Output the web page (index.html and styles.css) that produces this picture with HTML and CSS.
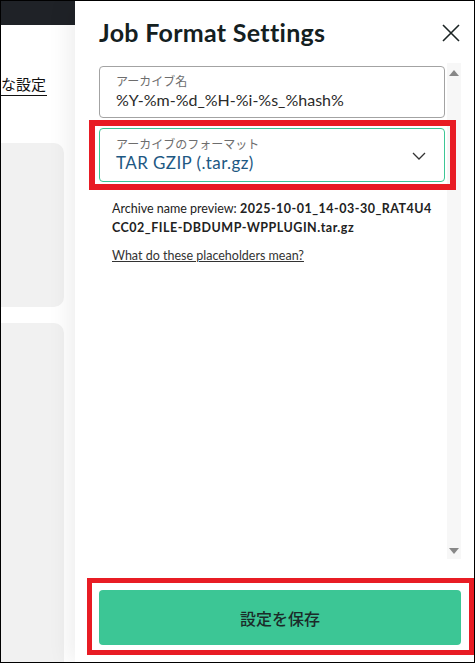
FILE: index.html
```html
<!DOCTYPE html>
<html lang="ja">
  <head>
    <meta charset="UTF-8" />
    <meta name="viewport" content="width=device-width, initial-scale=1.0" />
    <title>Job Format Settings</title>
    <link rel="stylesheet" href="styles.css">
  </head>
  <body>
    <div class="frame">
      <div class="page">
        <div class="topbar"></div>
        <a class="page-link" href="#">な設定</a>
        <div class="card"></div>
        <div class="card tall"></div>
      </div>

      <aside class="drawer">
        <header class="drawer-head">
          <h1>Job Format Settings</h1>
          <button class="close" aria-label="Close">
            <svg width="18" height="18" viewBox="0 0 18 18">
              <path d="M1 1 L17 17 M17 1 L1 17" stroke="#1b2424" stroke-width="1.6" fill="none" />
            </svg>
          </button>
        </header>

        <div class="drawer-body">
          <div class="scroll-content">
            <div class="field">
              <label>アーカイブ名</label>
              <div class="value">%Y-%m-%d_%H-%i-%s_%hash%</div>
            </div>

            <div class="field select mark">
              <label>アーカイブのフォーマット</label>
              <div class="value">TAR GZIP (.tar.gz)</div>
              <svg class="chevron" width="14" height="8" viewBox="0 0 14 8">
                <path d="M1 1 L7 7 L13 1" stroke="#333" stroke-width="1.3" fill="none" />
              </svg>
            </div>

            <p class="preview">Archive name preview: <strong>2025-10-01_14-03-30_RAT4U4CC02_FILE-DBDUMP-WPPLUGIN.tar.gz</strong></p>
            <a class="help" href="#">What do these placeholders mean?</a>
          </div>
          <div class="scrollbar">
            <span class="arrow up"></span>
            <span class="arrow down"></span>
          </div>
        </div>

        <footer class="drawer-foot">
          <button class="save mark">設定を保存</button>
        </footer>
      </aside>
    </div>
  </body>
</html>
```

FILE: styles.css
```css
body {
  margin: 0;
  font-family: "Lato", "Noto Sans CJK JP", sans-serif;
  color: #222;
  background: #fff;
}

.frame {
  position: relative;
  width: 475px;
  height: 663px;
  border: 1px solid #000;
  box-sizing: border-box;
  overflow: hidden;
}

/* page behind the drawer */
.topbar {
  height: 24px;
  background: #1f2227;
}

.page-link {
  display: inline-block;
  margin-top: 48px;
  font-family: "Noto Sans CJK JP", sans-serif;
  font-size: 15px;
  color: #111;
  text-decoration: none;
  border-bottom: 1px solid #111;
  line-height: 22px;
  padding-right: 1px;
}

.card {
  width: 63px;
  height: 164px;
  margin-top: 47px;
  background: #f1f1f1;
  border-radius: 0 10px 10px 0;
}

.card.tall {
  height: 400px;
  margin-top: 16px;
}

/* drawer */
.drawer {
  position: absolute;
  top: 0;
  right: 0;
  bottom: 0;
  width: 399px;
  background: #fff;
  box-shadow: -6px 0 22px rgba(0, 0, 0, 0.07);
  display: flex;
  flex-direction: column;
  padding: 0 13px 0 24px;
  box-sizing: border-box;
}

.drawer-head {
  height: 64px;
  display: flex;
  justify-content: space-between;
  align-items: center;
}

.drawer-head h1 {
  margin: -3px 0 0;
  font-size: 25px;
  font-weight: 700;
  color: #14201f;
  letter-spacing: 0.3px;
}

.close {
  background: none;
  border: none;
  padding: 0;
  margin-right: 1px;
  cursor: pointer;
  display: flex;
}

.drawer-body {
  flex: 1;
  display: flex;
  min-height: 0;
}

.scroll-content {
  flex: 1;
  padding-top: 1px;
}

.scrollbar {
  width: 14px;
  margin-left: 2px;
  margin-top: -2px;
  background: #f7f7f7;
  display: flex;
  flex-direction: column;
  justify-content: space-between;
  align-items: center;
  padding: 7px 0 5px;
}

.arrow {
  width: 0;
  height: 0;
  border-left: 5px solid transparent;
  border-right: 5px solid transparent;
}

.arrow.up {
  border-bottom: 6px solid #888;
}

.arrow.down {
  border-top: 6px solid #888;
}

.field {
  position: relative;
  height: 52px;
  box-sizing: border-box;
  border: 1px solid #a3a3a3;
  border-radius: 4px;
  padding: 6px 16px 0;
}

.field label {
  display: block;
  font-family: "Noto Sans CJK JP", sans-serif;
  font-size: 12px;
  line-height: 16px;
  color: #6d6d6d;
}

.field .value {
  font-size: 16px;
  line-height: 22px;
  color: #2a2a2a;
}

.field.select {
  margin-top: 10px;
  height: 54px;
  border-color: #3cc695;
  padding-top: 7px;
}

.field.select .value {
  font-size: 17px;
  letter-spacing: 0.4px;
  color: #1d5883;
}

.chevron {
  position: absolute;
  right: 18px;
  top: 23px;
}

/* red annotation boxes */
.mark::after {
  content: "";
  position: absolute;
  top: -9px;
  right: -12px;
  bottom: -9px;
  left: -11px;
  border: 6px solid #e81c24;
  pointer-events: none;
}

.preview {
  margin: 17px 0 0;
  padding: 0 13px;
  font-size: 12.5px;
  line-height: 19px;
  color: #222;
  word-break: break-all;
}

.preview strong {
  font-weight: 700;
  letter-spacing: 0.5px;
}

.help {
  display: inline-block;
  margin: 11px 0 0 13px;
  font-size: 12.5px;
  color: #333;
}

.drawer-foot {
  padding: 31px 0 17px;
}

.save {
  position: relative;
  width: 100%;
  height: 55px;
  border: none;
  border-radius: 4px;
  background: #3cc695;
  color: #1b2b29;
  font-family: "Noto Sans CJK JP", sans-serif;
  font-size: 16px;
  font-weight: 500;
  cursor: pointer;
}

.save.mark::after {
  top: -12px;
  right: -13px;
  bottom: -10px;
  left: -12px;
  border-width: 5px;
}
```
